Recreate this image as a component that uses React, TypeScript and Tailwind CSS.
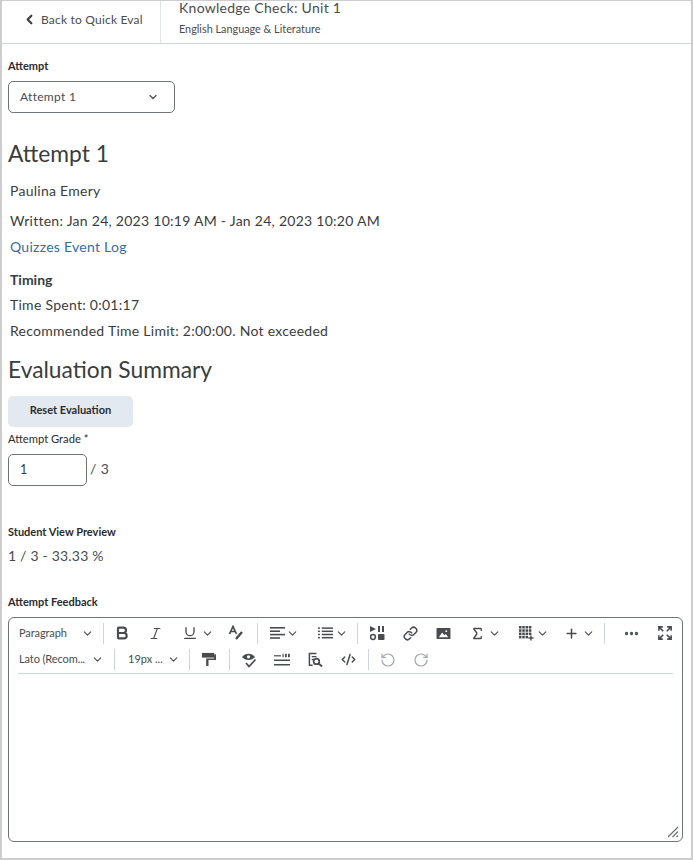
import React from 'react';
import { ChevronDown, ChevronLeft, Bold, Italic, Underline, Sigma, Plus, Ellipsis, Link, RotateCcw, RotateCw, CodeXml } from 'lucide-react';

const Sep = () => <div className="w-px h-[21px] bg-[#cdd5dc]" />;
const Caret = ({ className = '' }: { className?: string }) => (
  <ChevronDown className={`w-[13px] h-[13px] text-[#494c4e] ${className}`} strokeWidth={2} />
);

const AlignIcon = () => (
  <svg viewBox="0 0 16 14" className="w-[16px] h-[14px]" fill="#494c4e">
    <rect x="0" y="1" width="15" height="1.6" /><rect x="0" y="4.4" width="10" height="1.6" />
    <rect x="0" y="7.8" width="15" height="1.6" /><rect x="0" y="11.2" width="10" height="1.6" />
  </svg>
);
const ListIcon = () => (
  <svg viewBox="0 0 16 14" className="w-[15px] h-[14px]" fill="#494c4e">
    <rect x="0" y="1" width="2" height="1.6" /><rect x="4" y="1" width="12" height="1.6" />
    <rect x="0" y="4.4" width="2" height="1.6" /><rect x="4" y="4.4" width="12" height="1.6" />
    <rect x="0" y="7.8" width="2" height="1.6" /><rect x="4" y="7.8" width="12" height="1.6" />
    <rect x="0" y="11.2" width="2" height="1.6" /><rect x="4" y="11.2" width="12" height="1.6" />
  </svg>
);
const FormatIcon = () => (
  <svg viewBox="0 0 16 16" className="w-[16px] h-[16px]" fill="none" stroke="#494c4e" strokeWidth="1.7">
    <path d="M1.5 9 L5 1.5 L8.5 9 M3 6.5 H7" />
    <path d="M8 14 L14 7" strokeWidth="2.4" />
  </svg>
);
const MediaIcon = () => (
  <svg viewBox="0 0 16 16" className="w-[16px] h-[16px]" fill="#494c4e">
    <path d="M1 1 L7 4 L1 7 Z" /><rect x="9" y="1" width="2" height="6" /><rect x="13" y="1" width="2" height="6" />
    <circle cx="4" cy="12" r="2.4" fill="none" stroke="#494c4e" strokeWidth="1.5" />
    <rect x="9" y="9" width="6.5" height="6" rx="1" />
  </svg>
);
const ImageIcon = () => (
  <svg viewBox="0 0 16 14" className="w-[15px] h-[13px]">
    <rect x="0.5" y="1" width="15" height="12" rx="1" fill="#494c4e" />
    <path d="M3 11 L6.5 6 L9 9 L10.5 7.5 L13 11 Z" fill="#fff" /><circle cx="11" cy="4.5" r="1" fill="#fff" />
  </svg>
);
const TableIcon = () => (
  <svg viewBox="0 0 16 16" className="w-[15px] h-[15px]" fill="#494c4e">
    {[0, 3.5, 7, 10.5].flatMap(y => [0, 3.5, 7, 10.5].map(x => (
      (x < 10 || y < 10) ? <rect key={`${x}-${y}`} x={x} y={y} width="2.7" height="2.7" /> : null
    )))}
    <path d="M12 10 h1.5 v2 h2 v1.5 h-2 v2 h-1.5 v-2 h-2 v-1.5 h2 z" />
  </svg>
);
const FullscreenIcon = () => (
  <svg viewBox="0 0 16 16" className="w-[14px] h-[14px]" fill="none" stroke="#494c4e" strokeWidth="1.8">
    <path d="M1 5.5 V1 H5.5 M1 1 L6 6 M15 5.5 V1 H10.5 M15 1 L10 6 M1 10.5 V15 H5.5 M1 15 L6 10 M15 10.5 V15 H10.5 M15 15 L10 10" />
  </svg>
);
const RollerIcon = () => (
  <svg viewBox="0 0 16 16" className="w-[15px] h-[15px]" fill="#494c4e">
    <rect x="1" y="1" width="13" height="5" /><rect x="14" y="2.5" width="2" height="4" />
    <path d="M16 5 V8.5 H8 V15 H5.5 V7 H14 V5 Z" />
  </svg>
);
const ProofIcon = () => (
  <svg viewBox="0 0 16 16" className="w-[16px] h-[16px]">
    <path d="M1 5 C4 0.5 11 0.5 14 5 C11 9 4 9 1 5 Z" fill="#494c4e" />
    <circle cx="7.5" cy="4.8" r="1.6" fill="#fff" />
    <path d="M5 11 L8 14.5 L14.5 7.5" fill="none" stroke="#494c4e" strokeWidth="1.7" />
  </svg>
);
const WordCountIcon = () => (
  <svg viewBox="0 0 16 14" className="w-[16px] h-[14px]" fill="#494c4e">
    <rect x="0" y="2.2" width="7" height="1.2" /><rect x="0" y="6.5" width="16" height="1.5" /><rect x="0" y="11" width="16" height="1.5" />
    <rect x="8.5" y="0.8" width="1.2" height="3.4" /><rect x="11" y="0.8" width="1.8" height="3.4" /><rect x="14" y="0.8" width="1.8" height="3.4" />
  </svg>
);
const FindIcon = () => (
  <svg viewBox="0 0 16 16" className="w-[15px] h-[15px]" fill="none" stroke="#494c4e">
    <path d="M9 1.5 H1.5 V14 H5" strokeWidth="1.6" />
    <path d="M4 5 H9 M4 8 H6" strokeWidth="1.4" />
    <circle cx="9" cy="10" r="3" strokeWidth="1.8" /><path d="M11 12 L15 15.5" strokeWidth="2" />
  </svg>
);
const Grip = () => (
  <svg viewBox="0 0 12 12" className="w-[12px] h-[12px]" stroke="#6e7376" strokeWidth="1.3">
    <path d="M1 11 L11 1 M5.5 11 L11 5.5 M9.5 11 L11 9.5" />
  </svg>
);

const Label = ({ children, className = '' }: { children: React.ReactNode; className?: string }) => (
  <div className={`text-[11px] leading-[14px] font-bold text-[#2a2c2e] ${className}`}>{children}</div>
);

export default function App() {
  return (
    <div className="w-[693px] h-[860px] bg-white border-2 border-t border-[#cdcdcd] overflow-hidden text-[#3a3c3e] font-['Lato',sans-serif]">
      <header className="flex h-[43px] border-b border-[#cdd5dc]">
        <div className="w-[159px] border-r border-[#dfe4e8] flex items-center pl-[21px] pb-[5px] text-[12px] text-[#494c4e] tracking-[0.2px]">
          <ChevronLeft className="w-[15px] h-[15px] mr-[4px] -ml-[1px] text-[#3a3c3e]" strokeWidth={3.4} />
          Back to Quick Eval
        </div>
        <div className="pl-[18px] -mt-[2px]">
          <div className="text-[14px] leading-[18px] tracking-[0.27px] text-[#494c4e]">Knowledge Check: Unit 1</div>
          <div className="text-[10.85px] leading-[14px] mt-[5px] text-[#494c4e]">English Language &amp; Literature</div>
        </div>
      </header>

      <main className="px-[6px]">
        <Label className="mt-[15px]">Attempt</Label>
        <div className="mt-[8px] w-[167px] h-[32px] border border-[#6e7376] rounded-[5px] flex items-center justify-between pl-[11px] pr-[15px] text-[12px] tracking-[0.3px] text-[#494c4e]">
          Attempt 1
          <ChevronDown className="w-[12px] h-[12px] text-[#494c4e]" strokeWidth={2.4} />
        </div>

        <h1 className="mt-[26px] text-[22.8px] leading-[29px] font-normal">Attempt 1</h1>
        <div className="ml-[2px] mt-[13px] text-[14px] leading-[20px] tracking-[0.27px]">Paulina Emery</div>
        <div className="ml-[2px] mt-[10px] text-[14px] leading-[20px] tracking-[0.27px]">Written: Jan 24, 2023 10:19 AM - Jan 24, 2023 10:20 AM</div>
        <div className="ml-[2px] mt-[6px] text-[14px] leading-[20px] tracking-[0.27px] text-[#2f6da4]">Quizzes Event Log</div>
        <div className="ml-[2px] mt-[13px] text-[14px] leading-[20px] font-bold">Timing</div>
        <div className="ml-[2px] mt-[5px] text-[14px] leading-[20px] tracking-[0.27px]">Time Spent: 0:01:17</div>
        <div className="ml-[2px] mt-[6px] text-[14px] leading-[20px] tracking-[0.27px]">Recommended Time Limit: 2:00:00. Not exceeded</div>

        <h2 className="mt-[14px] text-[22.8px] leading-[29px] font-normal">Evaluation Summary</h2>
        <button className="mt-[12px] block w-[125px] h-[31px] pb-[2px] rounded-[5px] bg-[#e3e9f1] text-[11px] font-bold text-[#2a2c2e]">Reset Evaluation</button>
        <div className="mt-[5px] text-[11.2px] leading-[14px] font-normal text-[#2a2c2e]">Attempt Grade *</div>
        <div className="mt-[8px] flex items-center gap-[3px]">
          <div className="w-[79px] h-[32px] border border-[#6e7376] rounded-[5px] flex items-center pl-[11px] text-[12.5px]">1</div>
          <span className="pb-[3px] text-[14px] tracking-[0.4px] text-[#494c4e]">/ 3</span>
        </div>

        <Label className="mt-[39px]">Student View Preview</Label>
        <div className="mt-[7px] text-[14px] leading-[20px] tracking-[0.2px] text-[#494c4e]">1 / 3 - 33.33 %</div>
        <Label className="mt-[29px]">Attempt Feedback</Label>

        <section className="mt-[8px] w-[675px] h-[225px] border border-[#6e7376] rounded-[6px] relative">
          <div className="h-[30px] flex items-center pl-[10px]">
            <span className="text-[11px] text-[#494c4e] w-[63px] tracking-[-0.1px]">Paragraph</span>
            <Caret className="-ml-[1px]" />
            <div className="ml-[9px]"><Sep /></div>
            <Bold className="ml-[10px] w-[16px] h-[16px] text-[#494c4e]" strokeWidth={3.2} />
            <Italic className="ml-[18px] w-[15px] h-[15px] text-[#494c4e]" strokeWidth={1.8} />
            <Underline className="ml-[19px] w-[16px] h-[16px] text-[#494c4e]" strokeWidth={2} />
            <Caret className="ml-[3px]" />
            <div className="ml-[14px]"><FormatIcon /></div>
            <div className="ml-[13px]"><Sep /></div>
            <div className="ml-[12px]"><AlignIcon /></div>
            <Caret className="ml-[0px]" />
            <div className="ml-[19px]"><ListIcon /></div>
            <Caret className="ml-[2px]" />
            <div className="ml-[9px]"><Sep /></div>
            <div className="ml-[11px]"><MediaIcon /></div>
            <Link className="ml-[18px] w-[15px] h-[15px] text-[#494c4e]" strokeWidth={2.4} />
            <div className="ml-[18px]"><ImageIcon /></div>
            <Sigma className="ml-[19px] w-[15px] h-[15px] text-[#494c4e]" strokeWidth={2.2} />
            <Caret className="ml-[3px]" />
            <div className="ml-[18px]"><TableIcon /></div>
            <Caret className="ml-[2px]" />
            <Plus className="ml-[15px] w-[15px] h-[15px] text-[#494c4e]" strokeWidth={2.4} />
            <Caret className="ml-[3px]" />
            <div className="ml-[9px]"><Sep /></div>
            <Ellipsis className="ml-[18px] w-[17px] h-[17px] text-[#494c4e]" strokeWidth={2.6} />
            <div className="ml-[18px]"><FullscreenIcon /></div>
          </div>
          <div className="h-[23px] flex items-center pl-[10px]">
            <span className="text-[11px] text-[#494c4e] w-[69px] whitespace-nowrap tracking-[-0.1px]">Lato (Recom...</span>
            <Caret className="ml-[3px]" />
            <div className="ml-[10px]"><Sep /></div>
            <span className="ml-[13px] text-[11px] text-[#494c4e] w-[33px] whitespace-nowrap">19px ...</span>
            <Caret className="ml-[6px]" />
            <div className="ml-[9px]"><Sep /></div>
            <div className="ml-[11px]"><RollerIcon /></div>
            <div className="ml-[13px]"><Sep /></div>
            <div className="ml-[11px]"><ProofIcon /></div>
            <div className="ml-[17px]"><WordCountIcon /></div>
            <div className="ml-[18px]"><FindIcon /></div>
            <CodeXml className="ml-[18px] w-[15px] h-[15px] text-[#494c4e]" strokeWidth={2.4} />
            <div className="ml-[12px]"><Sep /></div>
            <RotateCcw className="ml-[11px] w-[16px] h-[16px] text-[#a3a7aa]" strokeWidth={1.8} />
            <RotateCw className="ml-[17px] w-[16px] h-[16px] text-[#a3a7aa]" strokeWidth={1.8} />
          </div>
          <div className="mx-[9px] mt-[2px] h-px bg-[#cdd5dc]" />
          <div className="absolute right-[3px] bottom-[3px]"><Grip /></div>
        </section>
      </main>
    </div>
  );
}
